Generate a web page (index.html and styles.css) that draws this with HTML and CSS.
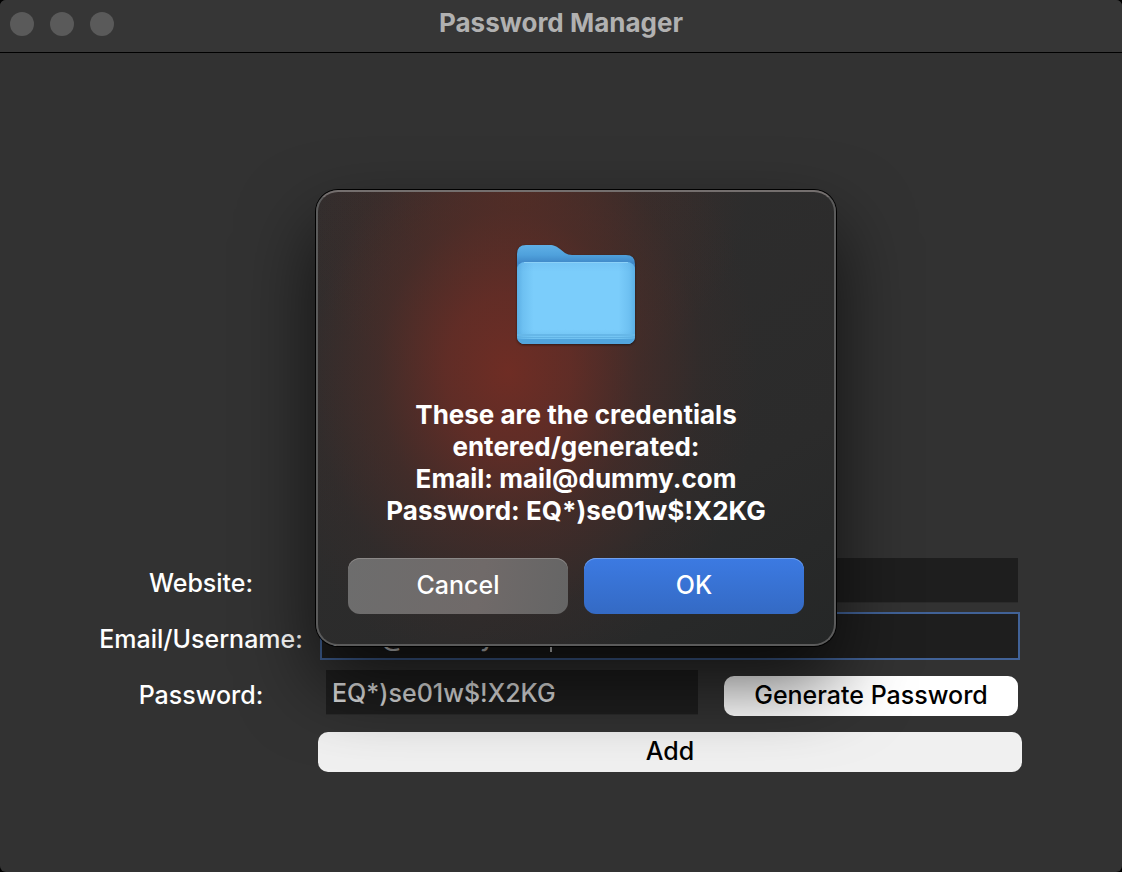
FILE: index.html
```
<!DOCTYPE html>
<html lang="en">
<head>
<meta charset="utf-8">
<title>Password Manager</title>
<link rel="stylesheet" href="styles.css">
</head>
<body>
<div class="window">
  <header class="titlebar">
    <div class="controls">
      <button class="control" type="button" aria-label="Close"></button>
      <button class="control" type="button" aria-label="Minimize"></button>
      <button class="control" type="button" aria-label="Zoom"></button>
    </div>
    <h1 class="title">Password Manager</h1>
  </header>
  <main class="content">
    <form class="form">
      <label class="label" for="website">Website:</label>
      <div class="row"><input class="field" id="website" type="text"></div>
      <label class="label" for="email">Email/Username:</label>
      <div class="row">
        <input class="field field-active" id="email" type="text" value="mail@dummy.com">
        <span class="caret"></span>
      </div>
      <label class="label" for="password">Password:</label>
      <div class="row row-split">
        <input class="field" id="password" type="text" value="EQ*)se01w$!X2KG">
        <button class="button button-generate" type="button">Generate Password</button>
      </div>
      <button class="button button-add" type="button">Add</button>
    </form>
  </main>
</div>
<div class="dialog" role="alertdialog" aria-modal="true" aria-labelledby="message">
  <svg class="folder" viewBox="0 0 128 128" aria-hidden="true">
    <defs>
      <linearGradient id="back" x1="0" y1="0" x2="0" y2="1">
        <stop offset="0" stop-color="#5fb0e6"/>
        <stop offset=".1" stop-color="#4fa1dc"/>
        <stop offset=".18" stop-color="#3f88c8"/>
        <stop offset="1" stop-color="#3f88c8"/>
      </linearGradient>
      <linearGradient id="front" x1="0" y1="0" x2="0" y2="1">
        <stop offset="0" stop-color="#74c4f5"/>
        <stop offset=".12" stop-color="#7bcdfb"/>
        <stop offset=".82" stop-color="#7bcdfb"/>
        <stop offset="1" stop-color="#6cbdec"/>
      </linearGradient>
      <linearGradient id="sides">
        <stop offset="0" stop-color="#469bd6" stop-opacity=".6"/>
        <stop offset=".05" stop-color="#469bd6" stop-opacity=".25"/>
        <stop offset=".14" stop-color="#469bd6" stop-opacity="0"/>
        <stop offset=".86" stop-color="#469bd6" stop-opacity="0"/>
        <stop offset=".95" stop-color="#469bd6" stop-opacity=".25"/>
        <stop offset="1" stop-color="#469bd6" stop-opacity=".6"/>
      </linearGradient>
      <clipPath id="panel"><rect x="5" y="31" width="118" height="82" rx="8"/></clipPath>
    </defs>
    <path fill="url(#back)" d="M5 23Q5 14 14 14H37C43 14 45 16 48 18L53 22Q56 24 60 24H114Q123 24 123 33V105Q123 113 115 113H13Q5 113 5 105Z"/>
    <g clip-path="url(#panel)">
      <rect x="5" y="31" width="118" height="82" fill="url(#front)"/>
      <rect x="5" y="31" width="118" height="82" fill="url(#sides)"/>
      <rect x="5" y="103" width="118" height="2" fill="#66b7e8"/>
      <rect x="5" y="106" width="118" height="1" fill="#61b2e4"/>
      <rect x="5" y="108" width="118" height="5" fill="#52a5dd"/>
      <path stroke="#8bd1f8" stroke-width="1" d="M12 31.5H116"/>
    </g>
  </svg>
  <p class="message" id="message">These are the credentials entered/generated:<br>Email: mail@dummy.com<br>Password: EQ*)se01w$!X2KG</p>
  <div class="actions">
    <button class="action" type="button">Cancel</button>
    <button class="action action-primary" type="button">OK</button>
  </div>
</div>
</body>
</html>
```
FILE: styles.css
```
* {
  box-sizing: border-box;
}

body {
  margin: 0;
  background: #000;
  color: #fff;
  font-family: Inter, "Liberation Sans", sans-serif;
  font-size: 25px;
  font-weight: 500;
  line-height: 32px;
}

button,
input {
  border: 0;
  font: inherit;
}

.window {
  display: flex;
  flex-direction: column;
  min-height: 100vh;
  background: #323232;
  border-radius: 6px;
}

.titlebar {
  display: grid;
  grid-template-columns: 1fr auto 1fr;
  align-items: center;
  padding: 0 10px 5px;
  height: 53px;
  background: #363636;
  border-bottom: 1px solid #000;
  border-radius: 6px 6px 0 0;
}

.controls {
  display: flex;
  gap: 16px;
}

.control {
  width: 24px;
  height: 24px;
  padding: 0;
  border-radius: 50%;
  background: #5a5a5a;
}

.title {
  margin: 0;
  padding-bottom: 2px;
  color: #b1b1b1;
  font-size: 26px;
  font-weight: 700;
  line-height: 32px;
}

.content {
  flex: 1;
  display: flex;
  flex-direction: column;
  justify-content: flex-end;
  padding: 0 100px 92px 84px;
}

.form {
  display: grid;
  grid-template-columns: 234px minmax(0, 1fr);
  grid-auto-rows: 56px;
  align-items: center;
}

.label {
  padding-bottom: 2px;
  text-align: center;
}

.row {
  position: relative;
  align-self: start;
  display: flex;
  padding: 2px 4px 0;
}

.row-split {
  align-items: flex-start;
  gap: 26px;
  padding-left: 8px;
}

.field {
  flex: 1;
  min-width: 0;
  height: 44px;
  padding: 2px 6px 0;
  background: #1e1e1e;
  box-shadow: 0 1px 0 #2b2b2b;
  color: #dfdfdf;
}

.field-active {
  padding-left: 10px;
  outline: 2px solid #416297;
  box-shadow: none;
}

.caret {
  position: absolute;
  left: 232px;
  top: 8px;
  width: 2px;
  height: 32px;
  background: #dfdfdf;
}

.button {
  height: 40px;
  padding: 0 0 2px;
  border-radius: 10px;
  background: #fff;
  color: #000;
}

.button-generate {
  width: 294px;
  margin-top: 6px;
}

.button-add {
  grid-column: 2;
  background: #f0f0f0;
}

.dialog {
  position: absolute;
  left: 316px;
  top: 190px;
  width: 520px;
  padding: 39px 30px 30px;
  border: 2px solid #5b5b5b;
  border-top-color: #746f6e;
  border-radius: 22px;
  background:
    radial-gradient(ellipse 250px 310px at 190px 180px, rgb(114 45 36 / 95%), rgb(108 45 37 / 80%) 25%, rgb(86 44 38 / 50%) 52%, rgb(68 43 40 / 20%) 78%, rgb(60 42 40 / 0%)),
    radial-gradient(ellipse 230px 210px at 200px 0, rgb(84 46 38 / 85%), rgb(70 44 40 / 40%) 55%, rgb(60 42 40 / 0%)),
    linear-gradient(150deg, #2f2e2e, #2b2b2b 70%, #252727);
  box-shadow: 0 0 0 1px #000, 0 36px 76px rgb(0 0 0 / 65%);
}

.folder {
  display: block;
  width: 128px;
  height: 128px;
  margin: 0 auto 40px;
  filter: drop-shadow(0 1px 1px rgb(0 0 0 / 50%));
}

.message {
  margin: 0 0 31px;
  font-size: 26px;
  font-weight: 700;
  text-align: center;
}

.actions {
  display: grid;
  grid-template-columns: 1fr 1fr;
  gap: 16px;
}

.action {
  height: 56px;
  padding: 0 0 2px;
  border-radius: 12px;
  background: linear-gradient(100deg, #6d6d6d, #706a69 60%, #656565);
  box-shadow: inset 0 1px 0 #8b8887;
  color: #fff;
}

.action-primary {
  background: linear-gradient(#3c7ae2, #346ac4);
  box-shadow: inset 0 1px 0 #70a0ee;
}
```
